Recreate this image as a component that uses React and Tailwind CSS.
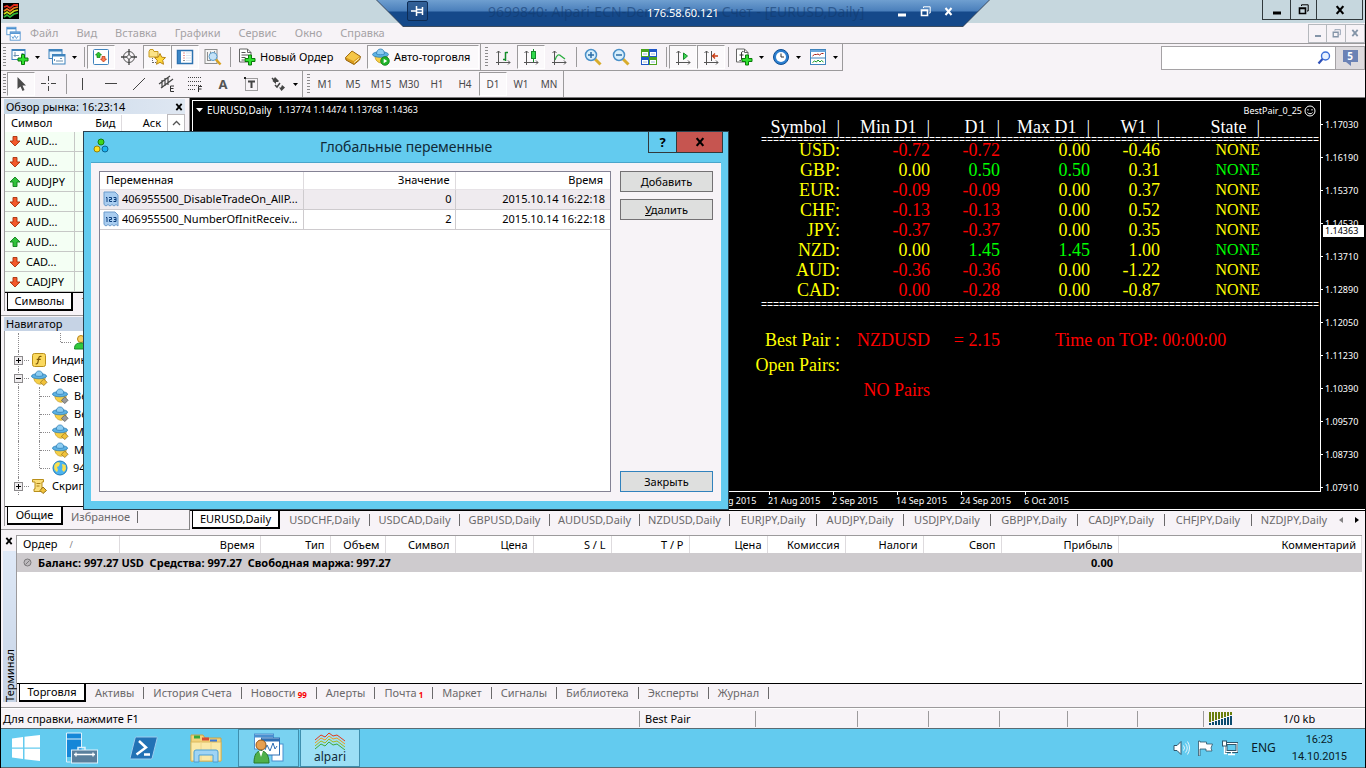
import React, { useState } from "react";
import clsx from "clsx";

/* ---------- data ---------- */

const MENU = ["Файл", "Вид", "Вставка", "Графики", "Сервис", "Окно", "Справка"];

const TIMEFRAMES = ["M1", "M5", "M15", "M30", "H1", "H4", "D1", "W1", "MN"];

const WATCH = [
    { symbol: "AUD...", up: false },
    { symbol: "AUD...", up: false },
    { symbol: "AUDJPY", up: true },
    { symbol: "AUD...", up: false },
    { symbol: "AUD...", up: false },
    { symbol: "AUD...", up: true },
    { symbol: "CAD...", up: false },
    { symbol: "CADJPY", up: false },
];

const Y = "text-[#ffff00]";
const R = "text-[#ff0000]";
const G = "text-[#00ff00]";

const STRENGTH = [
    { name: "USD:", cells: [["-0.72", R], ["-0.72", R], ["0.00", Y], ["-0.46", Y]], state: Y },
    { name: "GBP:", cells: [["0.00", Y], ["0.50", G], ["0.50", G], ["0.31", Y]], state: G },
    { name: "EUR:", cells: [["-0.09", R], ["-0.09", R], ["0.00", Y], ["0.37", Y]], state: Y },
    { name: "CHF:", cells: [["-0.13", R], ["-0.13", R], ["0.00", Y], ["0.52", Y]], state: Y },
    { name: "JPY:", cells: [["-0.37", R], ["-0.37", R], ["0.00", Y], ["0.35", Y]], state: Y },
    { name: "NZD:", cells: [["0.00", Y], ["1.45", G], ["1.45", G], ["1.00", Y]], state: G },
    { name: "AUD:", cells: [["-0.36", R], ["-0.36", R], ["0.00", Y], ["-1.22", Y]], state: Y },
    { name: "CAD:", cells: [["0.00", R], ["-0.28", R], ["0.00", Y], ["-0.87", Y]], state: Y },
];

const PRICES = [
    "1.17030", "1.16190", "1.15370", "1.14530", "1.13710", "1.12890",
    "1.12050", "1.11230", "1.10390", "1.09570", "1.08730", "1.07910",
];

const DATES = ["11 Aug 2015", "21 Aug 2015", "2 Sep 2015", "14 Sep 2015", "24 Sep 2015", "6 Oct 2015"];

const CHART_TABS = [
    "EURUSD", "USDCHF", "USDCAD", "GBPUSD", "AUDUSD", "NZDUSD", "EURJPY",
    "AUDJPY", "USDJPY", "GBPJPY", "CADJPY", "CHFJPY", "NZDJPY",
];

const TRADE_COLUMNS = [
    { title: "Ордер", width: "w-[102px]" },
    { title: "Время", width: "w-[141px]" },
    { title: "Тип", width: "w-[70px]" },
    { title: "Объем", width: "w-[55px]" },
    { title: "Символ", width: "w-[70px]" },
    { title: "Цена", width: "w-[78px]" },
    { title: "S / L", width: "w-[78px]" },
    { title: "T / P", width: "w-[78px]" },
    { title: "Цена", width: "w-[78px]" },
    { title: "Комиссия", width: "w-[78px]" },
    { title: "Налоги", width: "w-[78px]" },
    { title: "Своп", width: "w-[78px]" },
    { title: "Прибыль", width: "w-[117px]" },
    { title: "Комментарий", width: "" },
];

const TERMINAL_TABS = [
    { title: "Торговля" },
    { title: "Активы" },
    { title: "История Счета" },
    { title: "Новости", badge: "99" },
    { title: "Алерты" },
    { title: "Почта", badge: "1" },
    { title: "Маркет" },
    { title: "Сигналы" },
    { title: "Библиотека" },
    { title: "Эксперты" },
    { title: "Журнал" },
];

const VARIABLES = [
    { name: "406955500_DisableTradeOn_AllP...", value: "0", time: "2015.10.14 16:22:18" },
    { name: "406955500_NumberOfInitReceiv...", value: "2", time: "2015.10.14 16:22:18" },
];

/* ---------- icons ---------- */

const Svg = ({ size = 18, box = 18, children, className }) => (
    <svg width={size} height={size} viewBox={`0 0 ${box} ${box}`} className={clsx("shrink-0", className)} fill="none">
        {children}
    </svg>
);

const Plus = ({ x, y }) => (
    <path
        transform={`translate(${x} ${y})`}
        d="M4 0.5h3v3.500h3.500v3H7v3.500H4V7H.5V4H4z"
        fill="#2fe02f"
        stroke="#0a7a0a"
    />
);

const NewChartIcon = () => (
    <Svg>
        <rect x="1" y="1.500" width="13" height="10" fill="#fff" stroke="#3f83bd" />
        <path d="M1 2.500h13" stroke="#3f83bd" />
        <path d="M4 4v5M2.500 7.500H8M10.500 5.500h2" stroke="#6a8fae" />
        <Plus x="6.500" y="6" />
    </Svg>
);

const ProfilesIcon = () => (
    <Svg>
        <rect x="1" y="1.500" width="13" height="9" fill="#e8f3fc" stroke="#3f83bd" />
        <path d="M1 2.500h13" stroke="#3f83bd" strokeWidth="2" />
        <rect x="4.500" y="6.500" width="12.500" height="9.500" fill="#fff" stroke="#3f83bd" />
        <path d="M4.500 7.500H17" stroke="#3f83bd" strokeWidth="2" />
        <path d="M6.500 13v-2M8 13h7M12 10.500h2" stroke="#6a8fae" />
    </Svg>
);

const WatchIcon = () => (
    <Svg>
        <rect x="1.500" y="1.500" width="15" height="15" rx="1" fill="#fff" stroke="#3f83bd" />
        <path d="M6.500 4l3 3H8v2.500H5V7H3.500z" fill="#2ec52e" stroke="#0b7d0b" strokeWidth=".7" />
        <path d="M11.500 14l-3-3H10V8.500h3V11h1.500z" fill="#ff7a50" stroke="#b3300b" strokeWidth=".7" />
    </Svg>
);

const TargetIcon = () => (
    <Svg>
        <circle cx="9" cy="9" r="5.500" stroke="#555" />
        <circle cx="9" cy="9" r="2" stroke="#777" />
        <path d="M9 1v6M9 11v6M1 9h6M11 9h6" stroke="#444" strokeWidth="1.300" />
    </Svg>
);

const FolderStarIcon = () => (
    <Svg>
        <path d="M1 3.500V9h9V3.500H6L5 1.500H2z" fill="#fbe388" stroke="#c79a1e" />
        <path d="M4.500 10v5.500M5 14.500h3" stroke="#666" strokeDasharray="1 1" />
        <path
            d="M12 5.500l1.700 3.700 3.800.4-2.800 2.700.8 4-3.500-2-3.500 2 .8-4-2.800-2.700 3.800-.4z"
            fill="#ffd83c"
            stroke="#b98512"
        />
    </Svg>
);

const NavigatorIcon = () => (
    <Svg>
        <rect x="1.500" y="2.500" width="15" height="13" fill="#fff" stroke="#2c72b0" strokeWidth="1.500" />
        <path d="M3.500 3v12" stroke="#3c86c6" strokeWidth="3" />
        <path d="M7.500 5h1M7.500 7.500h1M7.500 10h1" stroke="#d03030" />
        <path d="M7.500 12.500h1" stroke="#222" />
        <path d="M10 5h5M10 7.500h5M10 10h5M10 12.500h5" stroke="#dbe6f1" />
    </Svg>
);

const TesterIcon = () => (
    <Svg>
        <rect x="1" y="1.500" width="12" height="14" fill="#f4f4f4" stroke="#8d8d8d" />
        <path d="M3.500 4v9M3 12.500h4M6.500 3.500v4M10.500 3v3" stroke="#8d8d8d" />
        <circle cx="9" cy="8.500" r="4" fill="#c4e2f8" stroke="#5a9ac8" />
        <path d="M12 11.500l4.500 5" stroke="#d8a01e" strokeWidth="2.500" />
    </Svg>
);

const DocPlus = ({ fn }) => (
    <Svg>
        <path d="M1.500 1h8l3.500 3.500V14H1.500z" fill="#fff" stroke="#666" />
        <path d="M9.500 1v3.500H13" stroke="#666" />
        {fn ? (
            <path d="M8.500 3.500c-2-.5-2 1-2 2.500v5c0 1-.5 2-2 1.500M4.500 7h4" stroke="#333" />
        ) : (
            <path d="M3.500 4.500h4M3.500 7h7M3.500 9.500h4M3.500 12h3" stroke="#555" />
        )}
        <Plus x="6.500" y="6.500" />
    </Svg>
);

const BookIcon = () => (
    <Svg>
        <path d="M1.500 9.500L8 3l8.500 5.500-1 3.500L10 16.500 2 12z" fill="#d99b1b" stroke="#95620b" />
        <path d="M2 9.500L8 3.500l7.500 5L9.500 13z" fill="#f5c648" />
        <path d="M10 14.500l5.500-4.500" stroke="#fff3c8" />
    </Svg>
);

const HatIcon = ({ mark, size = 18 }) => (
    <Svg size={size}>
        <path d="M3 8c0 4 3 7 6.500 7S15 12 15 8z" fill="#f6cf47" stroke="#c29a20" strokeWidth=".8" />
        <ellipse cx="8.500" cy="6.500" rx="8" ry="2.800" fill="#5cb2e4" stroke="#2e7eb4" strokeWidth=".8" />
        <path d="M4.500 6c0-3 1.500-5 4-5s4 2 4 5c-2 1-6 1-8 0z" fill="#8dcdf2" stroke="#2e7eb4" strokeWidth=".8" />
        {mark === "play" ? (
            <g>
                <circle cx="13" cy="13" r="4.300" fill="#1fb42a" stroke="#0b7d15" strokeWidth=".8" />
                <path d="M11.700 10.800v4.400l3.500-2.200z" fill="#fff" />
            </g>
        ) : (
            <path
                d="M13.500 9.500L17 13l-3.500 3.500L10 13z"
                fill={mark === "gray" ? "#9a9a9a" : "#f1c23a"}
                stroke={mark === "gray" ? "#555" : "#94701a"}
                strokeWidth=".8"
            />
        )}
    </Svg>
);

const Axes = ({ children }) => (
    <Svg>
        <path d="M4.500 3v14M2 14.500h14M2.500 5l2-2 2 2M14 12.500l2 2-2 2" stroke="#555" />
        {children}
    </Svg>
);

const ZoomIcon = ({ plus }) => (
    <Svg>
        <path d="M11 11l5.500 5.500" stroke="#d8ac2c" strokeWidth="3" />
        <circle cx="7" cy="7" r="5.500" fill="#d9effc" stroke="#4a90c8" strokeWidth="1.500" />
        <path d={plus ? "M4 7h6M7 4v6" : "M4 7h6"} stroke="#2c6ea6" strokeWidth="1.500" />
    </Svg>
);

const TileIcon = () => (
    <Svg>
        <rect x="1" y="1" width="8" height="8" fill="#4aa31f" />
        <rect x="9" y="1" width="8" height="8" fill="#1f57c8" />
        <rect x="1" y="9" width="8" height="8" fill="#1f57c8" />
        <rect x="9" y="9" width="8" height="8" fill="#4aa31f" />
        <path d="M2 4h6v4H2zM10 4h6v4h-6zM2 12h6v4H2zM10 12h6v4h-6z" fill="#fff" />
        <path d="M3 6h4M11 6h4M3 14h4M11 14h4" stroke="#9cb8d8" />
    </Svg>
);

const ClockIcon = () => (
    <Svg>
        <circle cx="9" cy="9" r="7.500" fill="#2c7fd0" stroke="#0f4f94" />
        <circle cx="9" cy="9" r="5" fill="#fff" />
        <path d="M9 5.500V9h3" stroke="#333" />
    </Svg>
);

const TemplateIcon = () => (
    <Svg>
        <rect x="1.500" y="1.500" width="15" height="15" fill="#fff" stroke="#3f83bd" />
        <path d="M1.500 3h15" stroke="#6aa7dc" strokeWidth="2" />
        <path d="M1.500 10h15" stroke="#3f83bd" />
        <path d="M3.500 8l2-1.500h2L9 6l1.500 1 2-1.500h2" stroke="#a82018" />
        <path d="M3.500 14.500l2-1.500 2 1 1.500-2 2 2 1.500-1.500 2 1.500" stroke="#169a28" />
    </Svg>
);

const ArrowMark = ({ up }) => (
    <Svg size={12} box={12}>
        <path
            d={up ? "M6 1l5 5H8v4.500H4V6H1z" : "M6 11L1 6h3V1.500h4V6h3z"}
            fill={up ? "#2fc23a" : "#f4592a"}
            stroke={up ? "#0d7d1a" : "#a8310c"}
            strokeWidth=".9"
        />
    </Svg>
);

const CloseX = ({ color = "#000", size = 9 }) => (
    <svg width={size} height={size} viewBox="0 0 9 9" className="shrink-0">
        <path d="M1.500 1l6 7M7.500 1l-6 7" stroke={color} strokeWidth="2" />
    </svg>
);

const MinMark = ({ color }) => (
    <svg width="10" height="10" viewBox="0 0 10 10">
        <path d="M1 8h8" stroke={color} strokeWidth="3" />
    </svg>
);

const RestoreMark = ({ color }) => (
    <svg width="11" height="11" viewBox="0 0 11 11" fill="none">
        <path d="M3.500 2V.8h6.700V7H9" stroke={color} />
        <path d="M1.500 4h6v5.500h-6zM1.500 4.500h6" stroke={color} strokeWidth="1.600" />
    </svg>
);

const VariableIcon = () => (
    <svg width="16" height="16" viewBox="0 0 16 16" fill="none" className="shrink-0">
        <path d="M1 1h11l3 3v11l-2-1.500L11 15l-2-1.500L7 15l-2-1.500L3 15l-2-1.500z" fill="#a9cdf0" stroke="#6d9ccc" />
        <path
            d="M3 6.500h1V11M6 6.500h2.500v2H6.500v2H9M10.500 6.500H13v4h-2.500M11 8.500h2"
            stroke="#0d3f7c"
        />
    </svg>
);

/* ---------- small controls ---------- */

const Grip = () => (
    <div className="mr-px ml-[2px] h-[20px] w-[3px] bg-[repeating-linear-gradient(#8c8a8c_0_1px,transparent_1px_3px)]" />
);

const Sep = () => (
    <div className="flex h-[20px] w-[6px] justify-center">
        <div className="w-px bg-[#9c9a9c]" />
    </div>
);

const Caret = ({ className }) => (
    <svg width="5" height="3" viewBox="0 0 5 3" className={className}>
        <path d="M0 0h5L2.500 3z" fill="#000" />
    </svg>
);

const ToolButton = ({ label, pressed, split, children, className }) => (
    <button
        aria-label={label}
        className={clsx(
            "flex h-[24px] shrink-0 items-center border",
            split ? "w-[37px] gap-[6px] pl-[3px]" : "w-[28px] justify-center",
            pressed ? "border-t-[#9c9a9c] border-r-white border-b-white border-l-[#9c9a9c] bg-[#fbf9fb]" : "border-transparent",
            className
        )}
    >
        {children}
        {split && <Caret />}
    </button>
);

const Tab = ({ active, children, onClick, className }) => (
    <button
        onClick={onClick}
        className={clsx(
            "whitespace-nowrap",
            active
                ? "h-[18px] border-x border-b border-black bg-white text-black"
                : "flex h-[18px] items-center text-[#6b696b]",
            className
        )}
    >
        {children}
    </button>
);

/* ---------- top of the window ---------- */

const TitleBar = () => (
    <div className="relative flex h-[23px] items-start justify-end bg-[#c6d7de] pr-[2px]">
        <div className="flex h-[20px] border-x border-b border-[#31393c]">
            <button aria-label="Свернуть" className="flex w-[28px] items-center justify-center border-r border-[#31393c]">
                <MinMark color="#000" />
            </button>
            <button aria-label="Развернуть" className="flex w-[26px] items-center justify-center border-r border-[#31393c]">
                <RestoreMark color="#000" />
            </button>
            <button aria-label="Закрыть окно" className="flex w-[45px] items-center justify-center">
                <CloseX size={10} />
            </button>
        </div>

        {/* Панель удаленного рабочего стола поверх заголовка */}
        <div className="absolute top-0 left-1/2 z-10 h-[27px] w-[614px] -translate-x-1/2 bg-[#3c4c60] [clip-path:polygon(0_0,100%_0,calc(100%-27px)_100%,27px_100%)]">
            <div className="relative flex h-[26px] items-center justify-center bg-[linear-gradient(#6f9fd0_0px,#4a7fbb_11px,#15498a_12px,#15498a_26px)] [clip-path:polygon(1px_0,calc(100%-1px)_0,calc(100%-27px)_100%,27px_100%)]">
                <div className="absolute top-[2px] left-[112px] text-[14px] leading-[20px] whitespace-nowrap text-[#123a6e]/60">
                    9699840: Alpari-ECN-Demo1: Демо Счет - [EURUSD,Daily]
                </div>
                <button
                    aria-label="Закрепить"
                    className="absolute top-[1px] left-[31px] flex h-[20px] w-[21px] items-center justify-center rounded-[2px] border border-[#0e2c54] bg-[#1d4880]/70"
                >
                    <svg width="13" height="10" viewBox="0 0 13 10" fill="none">
                        <path d="M0 5h5M5.500 0v10M6 3.500h5M6 6.500h5M11.500 1v8" stroke="#fff" strokeWidth="1.500" />
                    </svg>
                </button>
                <span className="relative text-[11px] text-white">176.58.60.121</span>
                <div className="absolute top-[6px] right-[37px] flex items-center gap-[13px]">
                    <MinMark color="#fff" />
                    <RestoreMark color="#fff" />
                    <CloseX color="#fff" />
                </div>
            </div>
        </div>
    </div>
);

const MenuBar = () => (
    <div className="flex h-[21px] items-center border-b border-[#9c9a9c] pl-[5px]">
        <Svg size={15}>
            <rect x="1" y="1.500" width="11" height="9" fill="#fff" stroke="#4a8fd0" />
            <path d="M1 3h11" stroke="#4a8fd0" strokeWidth="2" />
            <rect x="5" y="7" width="12" height="10" fill="#fff" stroke="#4a8fd0" />
            <path d="M5 8.500h12" stroke="#4a8fd0" strokeWidth="2" />
            <path d="M7 12.500l1.500 2.500 2-3.500 2 3.500 2-3" stroke="#4a8fd0" />
        </Svg>
        <nav className="ml-[9px] flex flex-1 gap-[18px] text-[11px] text-[#a5a2a5]">
            {MENU.map((item) => (
                <button key={item}>{item}</button>
            ))}
        </nav>
        <div className="flex h-[19px] border border-[#b5b8bd]">
            <button aria-label="Свернуть график" className="flex w-[18px] items-center justify-center border-r border-[#b5b8bd]">
                <svg width="6" height="8" viewBox="0 0 6 8">
                    <path d="M0 7h6" stroke="#8494a8" strokeWidth="2" />
                </svg>
            </button>
            <button aria-label="Развернуть график" className="flex w-[19px] items-center justify-center border-r border-[#b5b8bd]">
                <Svg size={9} box={11}>
                    <path d="M3.500 2V.8h6.700V7H9" stroke="#8494a8" />
                    <path d="M1.500 4h6v5.500h-6z" stroke="#8494a8" strokeWidth="1.600" />
                </Svg>
            </button>
            <button aria-label="Закрыть график" className="flex w-[18px] items-center justify-center">
                <CloseX color="#8494a8" size={8} />
            </button>
        </div>
    </div>
);

const MainToolbar = () => (
    <div className="flex h-[27px] items-center">
        <div className="flex h-full items-center border-r border-b border-[#9c9a9c] pr-px">
            <Grip />
            <ToolButton label="Новый график" split><NewChartIcon /></ToolButton>
            <ToolButton label="Профили" split><ProfilesIcon /></ToolButton>
            <Sep />
            <ToolButton label="Обзор рынка" pressed><WatchIcon /></ToolButton>
            <ToolButton label="Окно данных"><TargetIcon /></ToolButton>
            <ToolButton label="Навигатор" pressed><FolderStarIcon /></ToolButton>
            <ToolButton label="Терминал" pressed><NavigatorIcon /></ToolButton>
            <ToolButton label="Тестер стратегий"><TesterIcon /></ToolButton>
            <Sep />
            <button className="flex h-[24px] w-[106px] items-center gap-[4px] pl-[5px]">
                <DocPlus />
                <span className="whitespace-nowrap">Новый Ордер</span>
            </button>
            <ToolButton label="MetaEditor"><BookIcon /></ToolButton>
            <button className="flex h-[24px] w-[112px] items-center gap-[4px] border border-t-[#9c9a9c] border-r-white border-b-white border-l-[#9c9a9c] bg-[#fbf9fb] pl-[4px]">
                <HatIcon mark="play" />
                <span className="whitespace-nowrap">Авто-торговля</span>
            </button>
        </div>
        <div className="flex h-full items-center border-r border-b border-[#9c9a9c] pl-[2px]">
            <Grip />
            <ToolButton label="Бары"><Axes><path d="M11.500 4v9M11.500 4.500H14M9 11.500h2.500" stroke="#148c2a" strokeWidth="1.500" /></Axes></ToolButton>
            <ToolButton label="Свечи" pressed>
                <Axes>
                    <path d="M11.500 1v13" stroke="#148c2a" />
                    <rect x="9.500" y="3.500" width="4" height="7" fill="#2fd84a" stroke="#148c2a" />
                </Axes>
            </ToolButton>
            <ToolButton label="Линия"><Axes><path d="M5 12c2-6 4-6 6-4l4 3" stroke="#2cae40" strokeWidth="1.300" /></Axes></ToolButton>
            <Sep />
            <ToolButton label="Увеличить"><ZoomIcon plus /></ToolButton>
            <ToolButton label="Уменьшить"><ZoomIcon /></ToolButton>
            <ToolButton label="Плитка"><TileIcon /></ToolButton>
            <Sep />
            <ToolButton label="Автопрокрутка" pressed><Axes><path d="M9.500 5v6.500L13.500 8z" fill="#3fd653" stroke="#148c2a" /></Axes></ToolButton>
            <ToolButton label="Сдвиг графика" pressed><Axes><path d="M9.500 3v10" stroke="#555" /><path d="M16 8h-5M13 5.500L10.500 8l2.500 2.500" stroke="#c83c14" strokeWidth="1.300" /></Axes></ToolButton>
            <Sep />
            <ToolButton label="Индикаторы" split><DocPlus fn /></ToolButton>
            <ToolButton label="Периоды" split><ClockIcon /></ToolButton>
            <ToolButton label="Шаблоны" split><TemplateIcon /></ToolButton>
        </div>
        <div className="ml-auto flex h-[24px] border border-[#a5a2a5]">
            <label className="flex w-[173px] items-center bg-white pr-[4px]">
                <input aria-label="Поиск" className="min-w-0 flex-1 bg-transparent px-1 outline-none" />
                <Svg size={14} box={14}>
                    <circle cx="8.500" cy="5" r="4" fill="#e8f2ff" stroke="#3c6fd8" strokeWidth="1.400" />
                    <path d="M5.500 8L1.500 12.500" stroke="#2c4fb8" strokeWidth="2.200" />
                </Svg>
            </label>
            <button className="flex w-[29px] items-center justify-center border-l border-[#a5a2a5] bg-[#dedbde]" aria-label="Сообщения">
                <span className="relative mb-[3px] h-[12px] w-[15px] bg-[#6b82b5] text-center text-[10px] leading-[12px] font-bold text-white">
                    5
                    <svg width="5" height="4" viewBox="0 0 5 4" className="absolute top-[12px] left-[3px]">
                        <path d="M0 0h5v4z" fill="#6b82b5" />
                    </svg>
                </span>
            </button>
        </div>
    </div>
);

const DrawToolbar = ({ timeframe, onTimeframe }) => (
    <div className="flex h-[27px] items-center border-b border-[#7b797b]">
        <div className="flex h-full items-center border-r border-[#9c9a9c]">
            <Grip />
            <ToolButton label="Курсор" pressed>
                <Svg><path d="M5.500 2v12l3-2.500 2 4.500 2-1-2-4.500H14z" fill="#4a4a4a" /></Svg>
            </ToolButton>
            <ToolButton label="Перекрестие">
                <Svg><path d="M8.500 1v5M8.500 11v5M1 8.500h5M11 8.500h5M8 8.500h1" stroke="#444" /></Svg>
            </ToolButton>
            <Sep />
            <ToolButton label="Вертикальная линия"><Svg><path d="M8.500 3v12" stroke="#444" /></Svg></ToolButton>
            <ToolButton label="Горизонтальная линия"><Svg><path d="M3 8.500h12" stroke="#444" /></Svg></ToolButton>
            <ToolButton label="Трендовая линия"><Svg><path d="M3 15L15 3" stroke="#444" /></Svg></ToolButton>
            <ToolButton label="Канал">
                <Svg>
                    <path d="M1 9L12 1M3 13L15 4M4 5v8M7 3v8M10 2v8" stroke="#444" strokeWidth="1.200" />
                    <path d="M16 11h-3.500v5.500H16M12.500 13.500h3" stroke="#333" />
                </Svg>
            </ToolButton>
            <ToolButton label="Фибоначчи">
                <Svg>
                    <path d="M2 2.500h14M2 6.500h14M2 10.500h14M2 14.500h8" stroke="#444" strokeDasharray="1 1" />
                    <path d="M12.500 17v-5.500H16M12.500 14h3" stroke="#333" />
                </Svg>
            </ToolButton>
            <ToolButton label="Текст" className="text-[13px] font-bold text-[#555]">A</ToolButton>
            <ToolButton label="Метка">
                <Svg>
                    <rect x="3.500" y="3.500" width="12" height="12" stroke="#444" strokeDasharray="1 1" />
                    <path d="M6 6.500h7M9.500 6v7" stroke="#444" strokeWidth="2" />
                    <path d="M2 2h2v2H2z" fill="#222" />
                </Svg>
            </ToolButton>
            <ToolButton label="Стрелки" split>
                <Svg>
                    <path d="M6 2l4 4-1 1H7v2L3.500 6zM13 10l3 2.500-3.500 3.500-2.500-3.500h2z" fill="#444" />
                    <path d="M3 3l3 3M6 10l2 2 3-4" stroke="#444" strokeWidth="1.500" />
                </Svg>
            </ToolButton>
        </div>
        <div className="flex h-full items-center border-r border-[#9c9a9c] pl-[2px] text-[10px] text-[#4a484a]">
            <Grip />
            {TIMEFRAMES.map((tf) => (
                <button
                    key={tf}
                    onClick={() => onTimeframe(tf)}
                    className={clsx(
                        "h-[24px] w-[28px] border",
                        tf === timeframe
                            ? "border-t-[#9c9a9c] border-r-white border-b-white border-l-[#9c9a9c] bg-[#fbf9fb]"
                            : "border-transparent"
                    )}
                >
                    {tf}
                </button>
            ))}
        </div>
    </div>
);

/* ---------- left column ---------- */

const MarketWatch = () => (
    <section className="border-b border-[#9c9a9c] pr-[4px] pb-[4px] pl-[3px]">
        <div className="flex h-[15px] items-center justify-between bg-[linear-gradient(90deg,#c6d7e7,#dfe7f2)] pr-[2px] pl-[2px]">
            <h2 className="text-[11px] leading-[15px]">Обзор рынка: 16:23:14</h2>
            <button aria-label="Закрыть обзор рынка"><CloseX size={8} /></button>
        </div>
        <div className="border-l border-[#9c9a9c]">
            <table className="w-full table-fixed border-collapse bg-white">
                <thead>
                    <tr className="h-[17px]">
                        <th className="w-[69px] py-0 pl-[6px] text-left font-normal">Символ</th>
                        <th className="w-[47px] border-r border-[#dedbde] py-0 pr-[5px] text-right font-normal">Бид</th>
                        <th className="border-r border-[#bdbabd] py-0 pr-[6px] text-right font-normal">Аск</th>
                        <th className="w-[17px] border border-[#bdbabd] p-0">
                            <svg width="9" height="6" viewBox="0 0 9 6" className="mx-auto" fill="none">
                                <path d="M1 5l3.500-3.500L8 5" stroke="#555" strokeWidth="1.300" />
                            </svg>
                        </th>
                    </tr>
                </thead>
                <tbody className="bg-[#f4fff4]">
                    {WATCH.map((row, i) => (
                        <tr key={i} className="h-[20px] border-b border-[#c6c8c6]">
                            <td className="border-r border-[#c6c8c6] p-0">
                                <div className="flex items-center gap-[5px] pl-[4px]">
                                    <ArrowMark up={row.up} />
                                    {row.symbol}
                                </div>
                            </td>
                            <td className="border-r border-[#c6c8c6]" />
                            <td />
                            <td className="bg-[#efedef]" />
                        </tr>
                    ))}
                </tbody>
            </table>
            <div className="flex border-t border-black">
                <Tab active className="ml-[2px] w-[66px] border-r-2 border-b-2">Символы</Tab>
                <Tab className="pl-[9px]">Тиковый</Tab>
            </div>
        </div>
    </section>
);

const TreeRow = ({ toggle, deep, last, icon, children }) => (
    <li className="relative flex h-[18px] items-center">
        <div className="ml-[13px] h-full w-px border-l border-dotted border-[#8c8a8c]" />
        {toggle ? (
            <>
                <div className="w-[10px] border-t border-dotted border-[#8c8a8c]" />
                <span className="absolute left-[9px] flex h-[9px] w-[9px] items-center justify-center border border-[#8c8a8c] bg-[#efedef]">
                    <svg width="5" height="5" viewBox="0 0 5 5">
                        <path d={toggle === "plus" ? "M0 2.500h5M2.500 0v5" : "M0 2.500h5"} stroke="#000" />
                    </svg>
                </span>
            </>
        ) : (
            <>
                <div className={clsx("w-px border-l border-dotted border-[#8c8a8c]", deep ? "ml-[41px]" : "ml-[20px]", last ? "h-[9px] self-start" : "h-full")} />
                <div className="w-[10px] border-t border-dotted border-[#8c8a8c]" />
            </>
        )}
        <div className="ml-[2px] flex items-center gap-[5px] whitespace-nowrap">
            {icon}
            <span>{children}</span>
        </div>
    </li>
);

const FunctionIcon = () => (
    <Svg size={16} box={16}>
        <rect x="1.500" y="1.500" width="13" height="13" rx="2" fill="#fbd95e" stroke="#b98f1a" />
        <path d="M10.500 4.500c-2-.7-2.500.5-2.800 2L7 10c-.3 1.500-.8 2.200-2.300 1.700M5.700 7.300h4" stroke="#7a5606" strokeWidth="1.200" />
    </Svg>
);

const GlobeIcon = () => (
    <Svg size={16} box={16}>
        <circle cx="8" cy="8" r="7" fill="#4db4ee" stroke="#1f7ab8" />
        <path d="M3 4c2-2 4-2 5-1L7 6 5 7l1 3-1 2C2 10 1.500 7 3 4zM10 4l3.500 1 .5 4-2 3-2-2 .5-3z" fill="#fbe04c" />
    </Svg>
);

const ScriptIcon = () => (
    <Svg size={16} box={16}>
        <path d="M1.500 1.500h11v2.500H11v7h2v2.500H3V11h1V4H1.500z" fill="#fbdf7c" stroke="#b98f1a" />
        <path d="M5.500 5.500h4M5.500 8h3" stroke="#a87f18" />
        <path d="M12 9l3.500 3.500L12 15.500 9 12.500z" fill="#f1c23a" stroke="#94701a" />
    </Svg>
);

const UserIcon = () => (
    <Svg size={16} box={16}>
        <circle cx="8" cy="5" r="3.500" fill="#f8cf68" stroke="#b98512" />
        <path d="M1.500 15c0-5 2.500-6 6.500-6s6.500 1 6.500 6z" fill="#32c93c" stroke="#148c2a" />
    </Svg>
);

const Navigator = () => (
    <section className="flex flex-1 flex-col border-b border-[#9c9a9c] pt-px pr-[4px] pb-[3px] pl-[3px]">
        <h2 className="h-[14px] bg-[#c6d3e5] pl-[2px] text-[11px] leading-[14px]">Навигатор</h2>
        <div className="flex flex-1 flex-col border-l border-[#9c9a9c] bg-white">
            <ul className="flex-1 pt-[2px]">
                <TreeRow deep last icon={<UserIcon />} />
                <TreeRow toggle="plus" icon={<FunctionIcon />}>Индикаторы</TreeRow>
                <TreeRow toggle="minus" icon={<HatIcon mark="gold" size={17} />}>Советники</TreeRow>
                <TreeRow icon={<HatIcon mark="gray" size={17} />}>Best</TreeRow>
                <TreeRow icon={<HatIcon mark="gray" size={17} />}>Best</TreeRow>
                <TreeRow icon={<HatIcon mark="gold" size={17} />}>MACD</TreeRow>
                <TreeRow icon={<HatIcon mark="gold" size={17} />}>Moving</TreeRow>
                <TreeRow last icon={<GlobeIcon />}>94</TreeRow>
                <TreeRow toggle="plus" icon={<ScriptIcon />}>Скрипты</TreeRow>
            </ul>
            <div className="flex border-t border-black bg-[#f7f3f7]">
                <Tab active className="ml-[2px] w-[56px] border-r-2 border-b-2">Общие</Tab>
                <Tab className="mt-px pl-[8px]">Избранное</Tab>
                <div className="mt-[4px] ml-[7px] h-[12px] w-px bg-[#6b696b]" />
            </div>
        </div>
    </section>
);

/* ---------- chart ---------- */

const DoubleRule = () => (
    <div className="h-[3px] font-['Liberation_Mono',monospace] text-[10px] leading-[8px] whitespace-nowrap text-white">
        {"=".repeat(93)}
    </div>
);

const Head = ({ className, children }) => (
    <th className={clsx("p-0 text-right font-normal", className)}>
        {children}
        <span className="pl-[10px]">|</span>
    </th>
);

const StrengthPanel = () => (
    <div className="ml-auto w-[559px] pt-[16px] font-['Liberation_Serif',serif] text-[18px] leading-[20px] whitespace-nowrap">
        <table className="border-collapse">
            <thead>
                <tr className="h-[20px] text-white">
                    <Head className="w-[79px]">Symbol</Head>
                    <Head className="w-[90px]">Min D1</Head>
                    <Head className="w-[70px]">D1</Head>
                    <Head className="w-[90px]">Max D1</Head>
                    <Head className="w-[70px]">W1</Head>
                    <Head className="w-[100px]">State</Head>
                    <th className="w-[60px]" />
                </tr>
                <tr>
                    <td colSpan={7} className="h-[3px] p-0"><DoubleRule /></td>
                </tr>
            </thead>
            <tbody>
                {STRENGTH.map((row) => (
                    <tr key={row.name} className="h-[20px] text-right">
                        <td className="p-0 text-[#ffff00]">{row.name}</td>
                        {row.cells.map(([value, color], i) => (
                            <td key={i} className={clsx("p-0", color)}>{value}</td>
                        ))}
                        <td className={clsx("p-0 text-[16px]", row.state)}>NONE</td>
                    </tr>
                ))}
            </tbody>
        </table>
        <div className="pt-[2px]"><DoubleRule /></div>
        <div className="mt-[23px] -ml-[10px] grid grid-cols-[89px_90px_70px_1fr] text-right leading-[25px] text-[#ff0000]">
            <span className="text-[#ffff00]">Best Pair :</span>
            <span>NZDUSD</span>
            <span>= 2.15</span>
            <span className="pl-[55px] text-left">Time on TOP: 00:00:00</span>
            <span className="text-[#ffff00]">Open Pairs:</span>
            <span className="col-span-3" />
            <span />
            <span>NO Pairs</span>
        </div>
    </div>
);

const Chart = () => (
    <div className="flex flex-1 bg-black pt-[2px] pl-[2px] text-[9px] text-white">
        <div className="flex min-w-0 flex-1 flex-col">
            <div className="relative flex-1 border border-white">
                <div className="absolute top-[2px] left-[3px] flex items-center gap-[4px] text-[10px] leading-[14px]">
                    <svg width="7" height="4" viewBox="0 0 7 4"><path d="M0 0h7L3.500 4z" fill="#fff" /></svg>
                    <span>EURUSD,Daily</span>
                    <span className="pl-[2px] text-[9px]">1.13774 1.14474 1.13768 1.14363</span>
                </div>
                <div className="absolute top-[3px] right-[4px] flex items-center gap-[2px] leading-[14px]">
                    <span>BestPair_0_25</span>
                    <Svg size={12} box={12}>
                        <circle cx="6" cy="6" r="5" stroke="#fff" />
                        <path d="M4 4v1.500M8 4v1.500M3.500 7.500c1 1.700 4 1.700 5 0" stroke="#fff" />
                    </Svg>
                </div>
                <StrengthPanel />
            </div>
            <div className="flex h-[17px] overflow-hidden pl-[512px]">
                {DATES.map((date) => (
                    <div key={date} className="w-[64px] shrink-0 whitespace-nowrap">
                        <div className="ml-px h-[3px] w-px bg-white" />
                        <div className="leading-[12px]">{date}</div>
                    </div>
                ))}
            </div>
        </div>
        <div className="relative w-[44px] pt-[8px]">
            {PRICES.map((price) => (
                <div key={price} className="flex h-[33px] items-center gap-[2px]">
                    <span className="h-px w-[2px] bg-white" />
                    {price}
                </div>
            ))}
            <div className="absolute top-[125px] left-[2px] w-[41px] bg-white pl-[2px] leading-[12px] text-black">1.14363</div>
        </div>
    </div>
);

const ChartTabs = ({ active, onSelect }) => (
    <div className="flex h-[21px] border-t border-white">
        <div className="flex flex-1 items-start overflow-hidden border-t border-black">
            {CHART_TABS.map((pair, i) => (
                <React.Fragment key={pair}>
                    <Tab
                        active={pair === active}
                        onClick={() => onSelect(pair)}
                        className={clsx(
                            "shrink-0 text-center",
                            pair === active ? "ml-[2px] w-[88px] border-r-2 border-b-2" : "justify-center",
                            pair !== active && (i < 6 ? "w-[89px]" : i < 12 ? "w-[86px]" : "w-[84px]")
                        )}
                    >
                        {pair},Daily
                    </Tab>
                    {pair !== active && i < 12 && <div className="mt-[3px] h-[12px] w-px shrink-0 bg-[#6b696b]" />}
                </React.Fragment>
            ))}
            <div className="mt-[6px] ml-auto flex gap-[12px] pr-[6px]">
                <button aria-label="Назад">
                    <svg width="4" height="6" viewBox="0 0 4 6"><path d="M4 0v6L0 3z" fill="#848284" /></svg>
                </button>
                <button aria-label="Вперед">
                    <svg width="4" height="6" viewBox="0 0 4 6"><path d="M0 0v6l4-3z" fill="#000" /></svg>
                </button>
            </div>
        </div>
    </div>
);

/* ---------- dialog ---------- */

const DialogButton = ({ children, primary }) => (
    <button
        className={clsx(
            "h-[21px] w-full border bg-[#dedfde] text-[11px] leading-[18px]",
            primary ? "border-[#3182bd]" : "border-[#737173]"
        )}
    >
        {children}
    </button>
);

const VariablesDialog = ({ onClose }) => (
    <div
        role="dialog"
        aria-label="Глобальные переменные"
        className="absolute top-[131px] left-[82px] z-20 flex h-[379px] w-[646px] flex-col border border-[#29414f] bg-[#63cbef] px-[7px] pb-[8px]"
    >
        <div className="relative flex h-[30px] items-center justify-center">
            <svg width="16" height="16" viewBox="0 0 16 16" className="absolute top-[6px] left-[2px]">
                <circle cx="8" cy="4" r="3" fill="#3fd61c" stroke="#16800a" />
                <circle cx="4" cy="11" r="3" fill="#ffe11c" stroke="#94800a" />
                <circle cx="12" cy="11" r="3" fill="#1cb4f0" stroke="#0a6494" />
            </svg>
            <h1 className="text-[14px] text-[#102a38]">Глобальные переменные</h1>
            <div className="absolute top-0 right-[-2px] flex h-[21px] border-x border-b border-[#31393c]">
                <button className="w-[28px] border-r border-[#31393c] text-[13px] leading-[18px] font-bold">?</button>
                <button onClick={onClose} aria-label="Закрыть" className="flex w-[45px] items-center justify-center bg-[#c65550]">
                    <CloseX size={10} />
                </button>
            </div>
        </div>
        <div className="flex flex-1 border-t border-[#4aa5cb] bg-[#f7f3f7] pt-[8px] pr-[8px] pb-[9px] pl-[8px]">
            <div className="w-[512px] border border-[#848294] bg-white">
                <table className="w-full table-fixed border-collapse">
                    <thead>
                        <tr className="h-[17px] border-b border-[#e7e3e7]">
                            <th className="w-[203px] border-r border-[#dedbde] py-0 pl-[6px] text-left font-normal">Переменная</th>
                            <th className="w-[152px] border-r border-[#dedbde] py-0 pr-[5px] text-right font-normal">Значение</th>
                            <th className="py-0 pr-[7px] text-right font-normal">Время</th>
                        </tr>
                    </thead>
                    <tbody>
                        {VARIABLES.map((row, i) => (
                            <tr key={row.name} className={clsx("h-[20px] border-b border-[#cecbce]", i === 0 && "bg-[#efebef]")}>
                                <td className="border-r border-[#cecbce] p-0">
                                    <div className="flex items-center gap-[3px] pl-[3px] whitespace-nowrap">
                                        <VariableIcon />
                                        {row.name}
                                    </div>
                                </td>
                                <td className="border-r border-[#cecbce] py-0 pr-[3px] text-right">{row.value}</td>
                                <td className="py-0 pr-[5px] text-right">{row.time}</td>
                            </tr>
                        ))}
                    </tbody>
                </table>
            </div>
            <div className="ml-[9px] flex flex-1 flex-col gap-[7px]">
                <DialogButton><u>Д</u>обавить</DialogButton>
                <DialogButton><u>У</u>далить</DialogButton>
                <div className="mt-auto"><DialogButton primary>Закрыть</DialogButton></div>
            </div>
        </div>
    </div>
);

/* ---------- terminal ---------- */

const Terminal = ({ tab, onTab }) => (
    <section className="flex h-[178px] border-b border-[#9c9a9c] pt-[5px] pr-[3px] pb-[5px]">
        <div className="flex w-[15px] flex-col items-center justify-between">
            <button aria-label="Закрыть терминал" className="mt-[2px]"><CloseX size={8} /></button>
            <h2 className="mt-[6px] ml-[2px] w-[13px] flex-1 rotate-180 bg-[linear-gradient(#c6d3e5,#dfe9f7)] text-left text-[11px] leading-[13px] [writing-mode:vertical-rl]">
                Терминал
            </h2>
        </div>
        <div className="flex min-w-0 flex-1 flex-col border-t border-l border-[#9c9a9c]">
            <div className="flex-1 bg-white">
                <table className="w-full table-fixed border-collapse">
                    <thead>
                        <tr className="h-[17px]">
                            {TRADE_COLUMNS.map((col, i) => (
                                <th
                                    key={i}
                                    className={clsx(
                                        "border-r border-[#dedbde] py-0 pr-[5px] font-normal whitespace-nowrap",
                                        col.width,
                                        i === 0 ? "pl-[6px] text-left" : "text-right"
                                    )}
                                >
                                    {col.title}
                                    {i === 0 && <span className="pl-[12px] text-[9px] text-[#848284]">/</span>}
                                </th>
                            ))}
                        </tr>
                    </thead>
                    <tbody>
                        <tr className="h-[19px] bg-[#cecbce] font-bold">
                            <td colSpan={12} className="p-0">
                                <div className="flex items-center pl-[6px] whitespace-pre">
                                    <Svg size={9} box={9} className="mr-[6px]">
                                        <circle cx="4.500" cy="4.500" r="3.500" fill="#bdbabd" stroke="#7b797b" />
                                        <path d="M2.500 6.500l4-4" stroke="#7b797b" />
                                    </Svg>
                                    Баланс: 997.27 USD  Средства: 997.27  Свободная маржа: 997.27
                                </div>
                            </td>
                            <td className="py-0 pr-[5px] text-right">0.00</td>
                            <td />
                        </tr>
                    </tbody>
                </table>
            </div>
            <div className="flex h-[19px] items-start border-t border-black">
                {TERMINAL_TABS.map(({ title, badge }) => (
                    <React.Fragment key={title}>
                        <Tab
                            active={title === tab}
                            onClick={() => onTab(title)}
                            className={title === tab ? "ml-[2px] w-[67px] border-r-2 border-b-2" : "px-[9px]"}
                        >
                            {title}
                            {badge && <sub className="pl-[2px] text-[8px] font-bold text-[#f70000]">{badge}</sub>}
                        </Tab>
                        {title !== tab && <div className="mt-[3px] h-[12px] w-px bg-[#6b696b]" />}
                    </React.Fragment>
                ))}
            </div>
        </div>
    </section>
);

const StatusBar = () => (
    <footer className="flex h-[20px] items-center border-t border-white text-[11px]">
        <div className="flex-1 pl-[2px]">Для справки, нажмите F1</div>
        <div className="h-[16px] w-[116px] border-l border-[#9c9a9c] pl-[5px] leading-[16px]">Best Pair</div>
        <div className="h-[16px] w-[102px] border-l border-[#9c9a9c]" />
        <div className="h-[16px] w-[71px] border-l border-[#9c9a9c]" />
        <div className="h-[16px] w-[71px] border-l border-[#9c9a9c]" />
        <div className="h-[16px] w-[68px] border-l border-[#9c9a9c]" />
        <div className="h-[16px] w-[70px] border-l border-[#9c9a9c]" />
        <div className="h-[16px] w-[66px] border-l border-[#9c9a9c]" />
        <div className="flex h-[16px] w-[162px] items-center border-l border-[#9c9a9c] pl-[5px]">
            <svg width="24" height="13" viewBox="0 0 24 13">
                {[0, 1, 2, 3, 4, 5, 6, 7].map((i) => (
                    <g key={i}>
                        <rect x={i * 3} y="0" width="2" height={10 - i} fill="#6b7e0c" />
                        <rect x={i * 3} y={11 - i} width="2" height={2 + i} fill="#0c4a6e" />
                    </g>
                ))}
            </svg>
            <span className="ml-[50px]">1/0 kb</span>
        </div>
    </footer>
);

/* ---------- taskbar ---------- */

const TaskButton = ({ label, active, className, children }) => (
    <button
        aria-label={label}
        className={clsx(
            "flex h-full flex-col items-center justify-center",
            active ? "border border-[#3f8fae]" : "",
            className
        )}
    >
        {children}
    </button>
);

const Taskbar = () => (
    <div className="flex h-[40px] border-y border-[#5a6b73] bg-[#63cbef]">
        <TaskButton label="Пуск" className="w-[50px]">
            <svg width="28" height="26" viewBox="0 0 28 26" fill="#fff">
                <path d="M0 3.500L11 2v10.500H0zM12.500 1.800L28 0v12.500H12.500zM0 13.800h11V24L0 22.500zM12.500 13.800H28V26l-15.500-1.800z" />
            </svg>
        </TaskButton>
        <TaskButton label="Диспетчер серверов" className="w-[62px]">
            <svg width="32" height="32" viewBox="0 0 32 32" fill="none">
                <path d="M.5 1h15v24H.5z" fill="#1587d8" />
                <path d="M.5 1h15v15M.5 1v29h4M.5 7h15" stroke="#dff1fb" />
                <path d="M12 18v-2.500h7V18" stroke="#dff1fb" strokeWidth="1.500" />
                <rect x="5.500" y="18" width="26" height="13" fill="#5a7f9c" stroke="#dff1fb" />
                <path d="M8 22.500h21M10 20.500v4M27 20.500v4" stroke="#fff" strokeWidth="1.300" />
            </svg>
        </TaskButton>
        <TaskButton label="PowerShell" className="w-[62px]">
            <svg width="28" height="24" viewBox="0 0 28 24" fill="none">
                <path d="M6.500 1h20q1 0 .7 1l-5 20q-.3 1-1.400 1h-20q-1 0-.7-1l5-20q.3-1 1.400-1z" fill="#2272b5" stroke="#9dccee" />
                <path d="M9 5l7 6.500L6.500 18.500M14 18.500h6" stroke="#fff" strokeWidth="2.500" />
            </svg>
        </TaskButton>
        <TaskButton label="Проводник" className="w-[62px]">
            <svg width="32" height="30" viewBox="0 0 32 30" fill="none">
                <path d="M1 2h12l2 3h16v23H1z" fill="#f2d27a" stroke="#c9a348" />
                <path d="M4 2.500h6v3H4z" fill="#35a83c" />
                <path d="M12 4.500h7v3h-7z" fill="#d84a32" />
                <path d="M20 6.500h7v3h-7z" fill="#3c78d8" />
                <path d="M1 9h30v19H1z" fill="#fbe9a8" stroke="#dcb95c" />
                <path d="M11 9v18M21 9v18" stroke="#eed68c" />
                <path d="M4 29V19q0-2 2-2h20q2 0 2 2v10h-5v-7H9v7z" fill="#9fd4f4" stroke="#4a9fd4" />
            </svg>
        </TaskButton>
        <TaskButton label="MetaTrader" active className="ml-px w-[61px] bg-[#79d2f1]">
            <svg width="32" height="32" viewBox="0 0 32 32" fill="none">
                <rect x="1.500" y="2" width="19" height="15" fill="#fff" stroke="#4a8fd0" />
                <path d="M1.500 4h19" stroke="#4a8fd0" strokeWidth="3" />
                <rect x="19" y="12" width="11" height="17" fill="#fff" stroke="#4a8fd0" />
                <rect x="8.500" y="6" width="18" height="17" fill="#fff" stroke="#2f6fb4" />
                <path d="M8.500 8h18" stroke="#2f6fb4" strokeWidth="3" />
                <path d="M12 18l2-5 3 6 3-8 2 6 2-3" stroke="#2f6fb4" />
                <circle cx="8" cy="13" r="5" fill="#e8a050" stroke="#94591a" />
                <path d="M1 31c0-9 3-12 7-12s8 3 8 12z" fill="#4fb04a" stroke="#2a7a2a" />
                <path d="M6 19l2 6 2-6z" fill="#fff" />
            </svg>
        </TaskButton>
        <TaskButton label="Alpari" active className="ml-px w-[60px] bg-[#9cdff5]">
            <svg width="32" height="18" viewBox="0 0 32 18" fill="none">
                <path d="M1 8l6-5 4 2 4-4 4 3 4-1 8 6" stroke="#e03a1c" />
                <path d="M1 11l6-5 4 2 4-4 4 3 4-1 8 6" stroke="#f09a1c" />
                <path d="M1 14l6-5 4 2 4-4 4 3 4-1 8 6" stroke="#a8b81c" />
                <path d="M1 17l6-5 4 2 4-4 4 3 4-1 8 6" stroke="#3fa83c" />
            </svg>
            <span className="text-[12px] leading-[14px] text-[#102a38]">alpari</span>
        </TaskButton>
        <div className="ml-auto flex items-center text-[#0a1c28]">
            <svg width="17" height="16" viewBox="0 0 17 16" fill="none" className="mr-[7px]">
                <path d="M1 5.500h3l4-4v13l-4-4H1z" fill="#fff" stroke="#31566b" />
                <path d="M10.500 5.500q2 2.500 0 5M12.500 3.500q3.500 4.500 0 9M14.500 1.500q4 6.500 0 13" stroke="#e8f7fd" />
            </svg>
            <svg width="17" height="16" viewBox="0 0 17 16" className="mr-[7px]">
                <path d="M1.500 1v15h1.500V9h6v2h6l-1-3 1.500-4h-6V2H3V1z" fill="#fff" stroke="#31566b" strokeWidth=".8" />
            </svg>
            <svg width="17" height="16" viewBox="0 0 17 16" fill="none" className="mr-[13px]">
                <rect x="5" y="3.500" width="11" height="8" fill="#63cbef" stroke="#31566b" strokeWidth="3" />
                <rect x="5" y="3.500" width="11" height="8" stroke="#fff" />
                <path d="M7 14.500h7M10.500 12v2.500M3.500 6v7.500H6" stroke="#fff" strokeWidth="1.300" />
                <rect x="1.500" y="1" width="4" height="5" fill="#fff" stroke="#31566b" />
            </svg>
            <span className="mr-[16px] text-[12px]">ENG</span>
            <div className="mr-[18px] text-center font-['Roboto',sans-serif] text-[11px] leading-[17px]">
                <div>16:23</div>
                <div>14.10.2015</div>
            </div>
        </div>
    </div>
);

/* ---------- page ---------- */

const App = () => {
    const [timeframe, setTimeframe] = useState("D1");
    const [chart, setChart] = useState("EURUSD");
    const [tab, setTab] = useState("Торговля");
    const [dialog, setDialog] = useState(true);

    return (
        <div className="relative flex min-h-screen flex-col overflow-hidden border-x border-black bg-[#f7f3f7] font-['Noto_Sans',sans-serif] text-[11px] leading-[14px] text-black">
            <svg width="16" height="16" viewBox="0 0 16 16" fill="none" className="absolute top-[3px] left-[2px] z-10" strokeWidth="1.800">
                <rect width="16" height="16" fill="#000" />
                <path d="M1 4l3-1 3 2 4-3 4 0" stroke="#e02a1c" />
                <path d="M1 8l3-2 3 2 4-3 4-1" stroke="#f07a1c" />
                <path d="M1 11l3-2 3 2 4-3 4-1" stroke="#c8d81c" />
                <path d="M1 14l3-2 3 2 4-3 4-1" stroke="#2fb83c" />
            </svg>
            <TitleBar />
            <MenuBar />
            <MainToolbar />
            <DrawToolbar timeframe={timeframe} onTimeframe={setTimeframe} />

            <main className="flex flex-1">
                <div className="flex w-[189px] shrink-0 flex-col border-r border-[#848284] pt-px">
                    <MarketWatch />
                    <Navigator />
                </div>
                <div className="flex min-w-0 flex-1 flex-col">
                    <Chart />
                    <ChartTabs active={chart} onSelect={setChart} />
                </div>
            </main>

            <Terminal tab={tab} onTab={setTab} />
            <StatusBar />
            <Taskbar />

            {dialog && <VariablesDialog onClose={() => setDialog(false)} />}
        </div>
    );
};

export default App;
